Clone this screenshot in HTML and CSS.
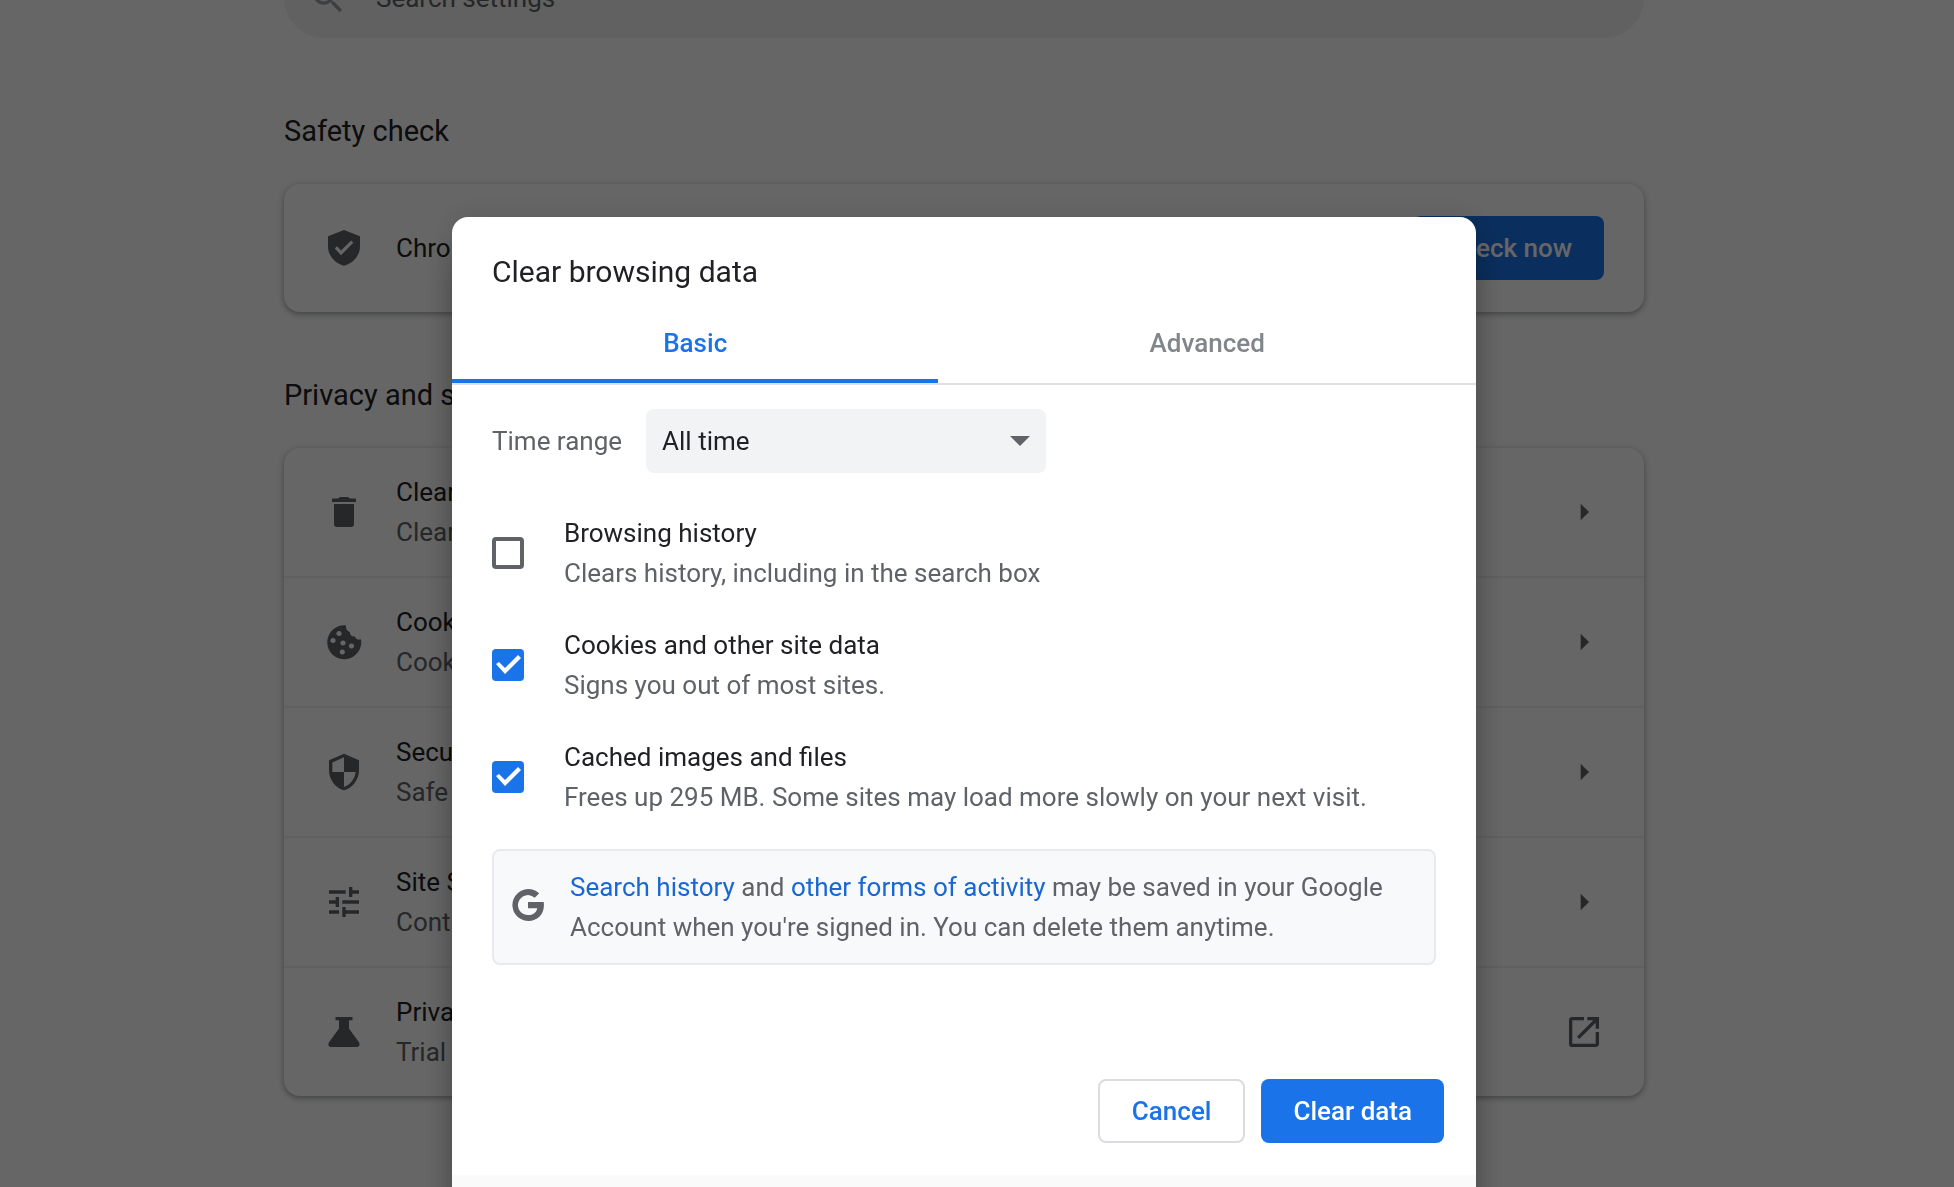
FILE: index.html
```html
<!DOCTYPE html>
<html lang="en">
<head>
<meta charset="utf-8">
<title>Settings - Clear browsing data</title>
<link rel="stylesheet" href="styles.css">
</head>
<body>
<main class="page">
  <div class="toolbar">
    <label class="search">
      <svg class="icon search-icon" viewBox="0 0 24 24" aria-hidden="true"><path d="M15.5 14h-.79l-.28-.27A6.47 6.47 0 0 0 16 9.5 6.5 6.5 0 1 0 9.5 16c1.61 0 3.09-.59 4.23-1.57l.27.28v.79l5 4.99L20.49 19l-4.99-5zm-6 0C7.01 14 5 11.99 5 9.5S7.01 5 9.5 5 14 7.01 14 9.5 11.99 14 9.5 14z"/></svg>
      <input class="search-input" type="search" placeholder="Search settings" aria-label="Search settings">
    </label>
  </div>

  <section class="section">
    <h2 class="section-title">Safety check</h2>
    <div class="card">
      <div class="row">
        <svg class="icon" viewBox="0 0 40 40" aria-hidden="true"><path fill-rule="evenodd" d="M20 2 36 8.3V18.500C36 27.500 29 35.500 20 37.800 11 35.500 4 27.500 4 18.500V8.300ZM13 18.200 10.800 20.500 17 27.200 29.300 14.700 27.200 12.500 17 22.500Z"/></svg>
        <p class="row-text"><span class="primary">Chrome can help keep you safe from data breaches, bad extensions, and more</span></p>
        <button class="button filled" type="button">Check now</button>
      </div>
    </div>
  </section>

  <section class="section">
    <h2 class="section-title">Privacy and security</h2>
    <div class="card">
      <div class="row">
        <svg class="icon" viewBox="0 0 40 40" aria-hidden="true"><path d="M8 7.500C8 6.700 8.500 6.500 9 6.500H14L16 5H24L26 6.500H31C31.700 6.500 32 6.800 32 7.500V10H8ZM10 12H30V32C30 34 29 35 27 35H13C11 35 10 34 10 32Z"/></svg>
        <p class="row-text"><span class="primary">Clear browsing data</span><span class="secondary">Clear history, cookies, cache, and more</span></p>
        <svg class="icon" viewBox="0 0 24 24" aria-hidden="true"><path d="M10 7l5 5-5 5z"/></svg>
      </div>
      <div class="row">
        <svg class="icon" viewBox="0 0 40 40" aria-hidden="true"><path fill-rule="evenodd" d="M22 3.300A17 17 0 1 0 37 17.300C34 18.200 31.500 17 31 14.500 28 15 25.500 13 26 10 23 9.500 21.500 6.500 22 3.300ZM15 8.900a2.600 2.600 0 1 0 .01 0ZM9 15.900a2.600 2.600 0 1 0 .01 0ZM19 18.400a2.600 2.600 0 1 0 .01 0ZM27.500 21.400a2.600 2.600 0 1 0 .01 0ZM18.300 27.400a2.600 2.600 0 1 0 .01 0Z"/></svg>
        <p class="row-text"><span class="primary">Cookies and other site data</span><span class="secondary">Cookies are allowed</span></p>
        <svg class="icon" viewBox="0 0 24 24" aria-hidden="true"><path d="M10 7l5 5-5 5z"/></svg>
      </div>
      <div class="row">
        <svg class="icon" viewBox="0 0 24 24" aria-hidden="true"><path d="M12 1L3 5v6c0 5.550 3.840 10.740 9 12 5.160-1.260 9-6.450 9-12V5l-9-4zm0 10.990h7c-.53 4.120-3.280 7.790-7 8.940V12H5V6.300l7-3.110v8.800z"/></svg>
        <p class="row-text"><span class="primary">Security</span><span class="secondary">Safe Browsing (protection from dangerous sites) and more</span></p>
        <svg class="icon" viewBox="0 0 24 24" aria-hidden="true"><path d="M10 7l5 5-5 5z"/></svg>
      </div>
      <div class="row">
        <svg class="icon" viewBox="0 0 24 24" aria-hidden="true"><path d="M3 17v2h6v-2H3zM3 5v2h10V5H3zm10 16v-2h8v-2h-8v-2h-2v6h2zM7 9v2H3v2h4v2h2V9H7zm14 4v-2H11v2h10zm-6-4h2V7h4V5h-4V3h-2v6z"/></svg>
        <p class="row-text"><span class="primary">Site Settings</span><span class="secondary">Controls what information sites can use and show</span></p>
        <svg class="icon" viewBox="0 0 24 24" aria-hidden="true"><path d="M10 7l5 5-5 5z"/></svg>
      </div>
      <div class="row">
        <svg class="icon" viewBox="0 0 40 40" aria-hidden="true"><path d="M11.500 5H28.500V8.300H25V16.500L34.800 30C36.500 32.500 35.500 35 32.500 35H7.500C4.500 35 3.500 32.500 5.200 30L15 16.500V8.300H11.500Z"/></svg>
        <p class="row-text"><span class="primary">Privacy Sandbox</span><span class="secondary">Trial features are on</span></p>
        <svg class="icon" viewBox="0 0 24 24" aria-hidden="true"><path d="M19 19H5V5h7V3H5a2 2 0 0 0-2 2v14a2 2 0 0 0 2 2h14c1.100 0 2-.9 2-2v-7h-2v7zM14 3v2h3.590l-9.830 9.830 1.410 1.410L19 6.410V10h2V3h-7z"/></svg>
      </div>
    </div>
  </section>
</main>

<div class="backdrop">
  <div class="dialog" role="dialog" aria-modal="true" aria-labelledby="dialog-title">
    <h1 class="dialog-title" id="dialog-title">Clear browsing data</h1>
    <div class="tabs" role="tablist">
      <button class="tab selected" type="button" role="tab" aria-selected="true">Basic</button>
      <button class="tab" type="button" role="tab" aria-selected="false">Advanced</button>
    </div>
    <div class="dialog-body">
      <div class="range">
        <label for="time-range">Time range</label>
        <select class="select" id="time-range">
          <option>Last hour</option>
          <option>Last 24 hours</option>
          <option>Last 7 days</option>
          <option>Last 4 weeks</option>
          <option selected>All time</option>
        </select>
      </div>
      <div class="options">
        <label class="option">
          <input class="checkbox" type="checkbox">
          <span class="option-text"><span class="primary">Browsing history</span><span class="secondary">Clears history, including in the search box</span></span>
        </label>
        <label class="option">
          <input class="checkbox" type="checkbox" checked>
          <span class="option-text"><span class="primary">Cookies and other site data</span><span class="secondary">Signs you out of most sites.</span></span>
        </label>
        <label class="option">
          <input class="checkbox" type="checkbox" checked>
          <span class="option-text"><span class="primary">Cached images and files</span><span class="secondary">Frees up 295 MB. Some sites may load more slowly on your next visit.</span></span>
        </label>
      </div>
      <div class="notice">
        <svg class="google" viewBox="0 0 32 32" aria-hidden="true"><path d="M16 13.100H31.600C31.900 14.400 32 15.400 31.900 16.800 31.700 26 25.300 32 16.300 32A16 16 0 1 1 27.200 4.200L22.700 8.700A10 10 0 1 0 16.300 26.100C21 26.100 24.500 23.500 25.200 19.200H16Z"/></svg>
        <p class="notice-text"><a class="link" href="#search-history">Search history</a> and <a class="link" href="#activity">other forms of activity</a> may be saved in your Google Account when you're signed in. You can delete them anytime.</p>
      </div>
    </div>
    <div class="actions">
      <button class="button outlined" type="button">Cancel</button>
      <button class="button filled" type="button">Clear data</button>
    </div>
    <div class="dialog-footer"></div>
  </div>
</div>
</body>
</html>
```

FILE: styles.css
```css
:root {
  --ink: #202124;
  --muted: #5f6368;
  --blue: #1a73e8;
}

* {
  box-sizing: border-box;
}

body {
  margin: 0;
  height: 100vh;
  overflow: hidden;
  background: #fff;
  color: var(--ink);
  font: 26px/40px Roboto, sans-serif;
}

h1, h2, p {
  margin: 0;
  font-weight: 400;
}

button, input, select {
  font: inherit;
}

/* Settings page */
.page {
  max-width: 1386px;
  margin: 0 auto;
  padding-right: 26px;
}

.toolbar {
  display: flex;
  align-items: flex-end;
  height: 38px;
}

.search {
  display: flex;
  flex: 1;
  align-items: center;
  gap: 28px;
  height: 80px;
  padding: 0 24px;
  border-radius: 40px;
  background: #f0f2f1;
}

.search-input {
  flex: 1;
  padding: 0;
  border: 0;
  background: none;
}

.search-input::placeholder {
  color: var(--muted);
}

.icon {
  flex: none;
  width: 40px;
  height: 40px;
  fill: var(--muted);
}

.search-icon {
  fill: #9aa0a6;
}

.section-title {
  padding: 74px 0 34px;
  font-size: 29px;
  line-height: 38px;
}

.section + .section .section-title {
  padding: 64px 0 34px;
}

.card {
  border-radius: 16px;
  background: #fff;
  box-shadow: 0 2px 4px rgba(60, 64, 67, .3), 0 2px 6px 2px rgba(60, 64, 67, .15);
}

.row {
  display: flex;
  align-items: center;
  gap: 32px;
  min-height: 128px;
  padding: 24px 40px;
}

.row + .row {
  min-height: 130px;
  border-top: 2px solid rgba(0, 0, 0, .06);
}

.row-text {
  flex: 1;
}

.primary, .secondary {
  display: block;
}

.secondary {
  color: var(--muted);
}

.button {
  height: 64px;
  padding: 0 32px;
  border: 0;
  border-radius: 8px;
  font-weight: 500;
}

.filled {
  background: var(--blue);
  color: #fff;
}

.outlined {
  border: 2px solid #dadce0;
  background: #fff;
  color: var(--blue);
}

/* Modal */
.backdrop {
  position: fixed;
  inset: 0;
  display: flex;
  align-items: flex-start;
  justify-content: center;
  overflow: hidden;
  padding: 217px 26px 0 0;
  background: rgba(0, 0, 0, .6);
}

.dialog {
  flex: 0 1 1024px;
  border-radius: 16px;
  background: #fff;
  box-shadow: 0 0 32px rgba(0, 0, 0, .12), 0 32px 32px rgba(0, 0, 0, .24);
}

.dialog-title {
  padding: 35px 40px 29px;
  font-size: 30px;
  line-height: 40px;
}

.tabs {
  display: flex;
  border-bottom: 2px solid #e0e0e0;
}

.tab {
  flex: 1 1 auto;
  height: 62px;
  padding: 0 0 14px;
  border: 0;
  border-bottom: 4px solid transparent;
  background: none;
  color: #80868b;
  font-weight: 500;
}

.selected {
  color: var(--blue);
  background: linear-gradient(var(--blue), var(--blue)) bottom / 100% 4px no-repeat border-box;
}

.dialog-body {
  padding: 24px 40px 0;
}

.range {
  display: flex;
  align-items: center;
  gap: 24px;
  color: var(--muted);
}

.select {
  width: 400px;
  height: 64px;
  padding: 0 16px;
  border: 0;
  border-radius: 8px;
  appearance: none;
  background: #f1f3f4 url("data:image/svg+xml,%3Csvg xmlns='http://www.w3.org/2000/svg' width='20' height='10'%3E%3Cpath fill='%235f6368' d='M0 0h20L10 10z'/%3E%3C/svg%3E") right 16px center no-repeat;
  color: var(--ink);
}

.options {
  display: grid;
  gap: 32px;
  padding: 40px 0 32px;
}

.option {
  display: flex;
  align-items: center;
  gap: 40px;
}

.checkbox {
  flex: none;
  width: 32px;
  height: 32px;
  margin: 0;
  border: 4px solid var(--muted);
  border-radius: 4px;
  appearance: none;
}

.checkbox:checked {
  border: 0;
  background: var(--blue);
}

.checkbox:checked::after {
  content: "";
  display: block;
  height: 32px;
  background: #fff;
  clip-path: polygon(4px 15px, 7px 13px, 13px 19px, 26px 6px, 29px 9px, 13px 25px);
}

.notice {
  display: flex;
  align-items: center;
  gap: 26px;
  padding: 16px 18px;
  border: 2px solid #e8eaed;
  border-radius: 8px;
  background: #f8f9fa;
  color: var(--muted);
}

.google {
  flex: none;
  width: 32px;
  height: 32px;
  margin-bottom: 4px;
  fill: var(--muted);
}

.link {
  color: #1967d2;
  text-decoration: none;
}

.actions {
  display: flex;
  justify-content: flex-end;
  gap: 16px;
  padding: 114px 32px 32px;
}

.dialog-footer {
  height: 120px;
  background: #fafafa;
}
```
